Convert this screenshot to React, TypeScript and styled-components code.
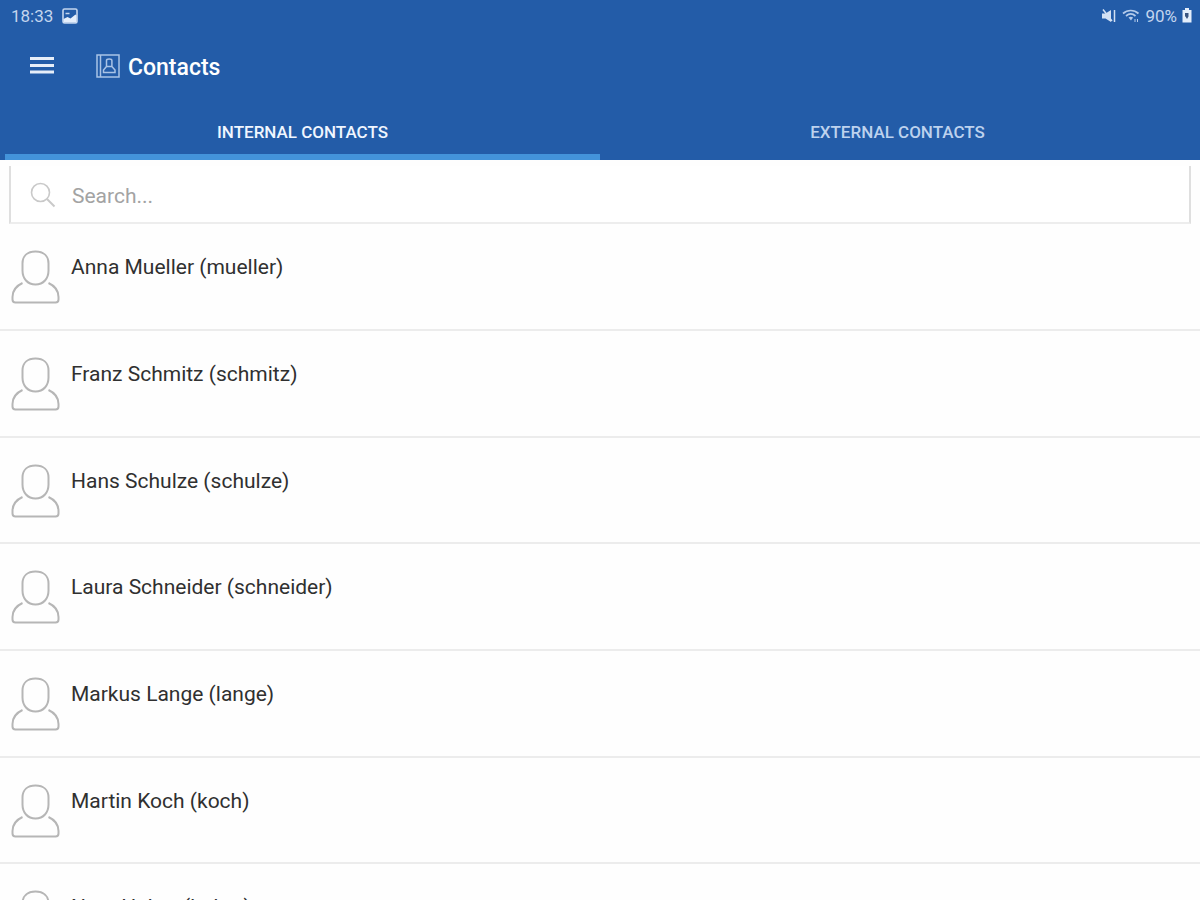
import React from "react";
import styled, { createGlobalStyle } from "styled-components";

const Global = createGlobalStyle`
  * { box-sizing: border-box; }
  html, body, #root { height: 100%; }
  body { margin: 0; background: #fefefe; font-family: Roboto, "Liberation Sans", sans-serif; }
`;

const Screen = styled.div`
  height: 100%;
  display: flex;
  flex-direction: column;
  overflow: hidden;
`;

const Header = styled.header`
  flex: none;
  background: #235ca8;
  color: #fff;
`;

const StatusBar = styled.div`
  display: flex;
  justify-content: space-between;
  align-items: center;
  height: 31px;
  padding: 0 8px 0 11px;
  font-size: 17px;
  color: #c3d5ee;
`;

const StatusGroup = styled.div<{ $gap: number }>`
  display: flex;
  align-items: center;
  gap: ${(p) => p.$gap}px;
`;

const TitleBar = styled.div`
  display: flex;
  align-items: center;
  height: 70px;
  padding-left: 30px;
`;

const MenuButton = styled.button`
  display: flex;
  padding: 0;
  margin-right: 42px;
  border: 0;
  background: none;
  color: inherit;
`;

const Title = styled.h1`
  display: flex;
  align-items: center;
  gap: 8px;
  margin: 0;
  font-size: 23px;
  font-weight: 500;
  line-height: 28px;
`;

const TitleText = styled.span`
  padding-top: 3px;
`;

const Tabs = styled.nav`
  display: flex;
  padding: 0 5px;
  height: 59px;
`;

const Tab = styled.button<{ $active?: boolean }>`
  flex: 1;
  padding: 9px 0 0;
  border: 0;
  border-bottom: 6px solid ${(p) => (p.$active ? "#4393da" : "transparent")};
  background: none;
  color: ${(p) => (p.$active ? "#f0f6ff" : "#bdd2ee")};
  font: 500 17px/20px Roboto, "Liberation Sans", sans-serif;
  text-transform: uppercase;
`;

const SearchBox = styled.label`
  flex: none;
  display: flex;
  align-items: center;
  gap: 16px;
  height: 58px;
  margin: 6px 9px 0;
  padding: 1px 0 0 19px;
  border: solid #dfdfdf;
  border-width: 0 2px 2px;
  border-bottom-color: #ededed;
  background: #fff;
`;

const SearchInput = styled.input`
  flex: 1;
  min-width: 0;
  padding: 2px 0 0;
  border: 0;
  outline: 0;
  background: none;
  color: #333;
  font: 400 21px/28px Roboto, "Liberation Sans", sans-serif;
  &::placeholder { color: #a3a3a3; opacity: 1; }
`;

const ContactList = styled.ul`
  flex: 1;
  min-height: 0;
  overflow: hidden;
  margin: 0;
  padding: 0;
  list-style: none;
`;

const ContactRow = styled.li`
  display: flex;
  align-items: flex-start;
  gap: 10px;
  height: 107px;
  padding: 26px 11px 0;
  border-bottom: 2px solid #ececec;
  &:nth-child(3n) { height: 106px; }
`;

const ContactName = styled.span`
  padding-top: 3px;
  font-size: 21px;
  line-height: 28px;
  color: #303030;
`;

const contacts = [
  "Anna Mueller (mueller)",
  "Franz Schmitz (schmitz)",
  "Hans Schulze (schulze)",
  "Laura Schneider (schneider)",
  "Markus Lange (lange)",
  "Martin Koch (koch)",
  "Nora Huber (huber)",
];

const PictureIcon = () => (
  <svg width="16" height="16" viewBox="0 0 16 16">
    <rect x="1" y="1" width="14" height="14" rx="1.5" fill="none" stroke="#c3d5ee" strokeWidth="1.6" />
    <path d="M1.5 14.5V11l4-2 3 1.500 5-4 1 1v7z" fill="#e4eefb" />
    <path d="M3.500 5.500h4" stroke="#c3d5ee" strokeWidth="1.500" />
  </svg>
);

const MuteIcon = () => (
  <svg width="16" height="16" viewBox="0 0 16 16" fill="#d3e1f4">
    <path d="M1 5.500h3.500L10 2v12l-5.500-3.500H1z" />
    <path d="M2 1.500l9 11.500M13.500 2v12" stroke="#d3e1f4" strokeWidth="1.500" />
  </svg>
);

const WifiIcon = () => (
  <svg width="18" height="16" viewBox="0 0 18 16" fill="none" stroke="#b5cbea" strokeWidth="1.700">
    <path d="M1 5.500c4.500-4 11-4 15.500 0M4 8c3-2.600 6.500-2.600 9.500 0" />
    <path d="M6.500 9.500q2.300-1.500 4.600 0L9 12.500z" fill="#b5cbea" stroke="none" />
    <path d="M13 11v3M15.500 11v3" strokeWidth="1" />
  </svg>
);

const BatteryIcon = () => (
  <svg width="10" height="15" viewBox="0 0 10 15">
    <path d="M3 0h4v2h2.500v12.500h-9V2H3z" fill="#e4eefb" />
    <path d="M3 5h3.500v3.500L5 11 3.500 8.500H3z" fill="#3a5580" />
  </svg>
);

const MenuIcon = () => (
  <svg width="24" height="20" viewBox="0 0 24 20">
    <path d="M0 2.500h24M0 9.500h24M0 16h24" stroke="#e6eef9" strokeWidth="3" />
  </svg>
);

const BookIcon = () => (
  <svg width="24" height="24" viewBox="0 0 24 24" fill="none" stroke="#a9c3e6" strokeWidth="1.500">
    <rect x="1" y="1" width="22" height="22" />
    <path d="M4.500 1v22" />
    <path d="M10.500 12.500V6.500q0-1.500 2.700-1.500t2.700 1.500v6M10.500 12.500L7.500 16v2.500h11.500V16l-3.100-3.500z" />
  </svg>
);

const SearchIcon = () => (
  <svg width="26" height="26" viewBox="0 0 26 26" fill="none" stroke="#c9c9c9" strokeWidth="1.600">
    <circle cx="10.500" cy="10.500" r="9" />
    <path d="M17 17l7.500 7.500" strokeWidth="2" />
  </svg>
);

const PersonIcon = () => (
  <svg width="50" height="54" viewBox="0 0 50 54" fill="none" stroke="#b6b6b6" strokeWidth="2">
    <path d="M24.500 1.500c-8 0-13 4.500-13 12v7c0 8 5 14 13 14s13-6 13-14v-7c0-7.500-5-12-13-12z" />
    <path d="M11.500 33C5 36 1.500 41 1.500 47v2.500q0 3 3 3h40q3 0 3-3V47c0-6-3.500-11-10-14" />
  </svg>
);

export default function App() {
  return (
    <>
      <Global />
      <Screen>
        <Header>
          <StatusBar>
            <StatusGroup $gap={9}>
              <span>18:33</span>
              <PictureIcon />
            </StatusGroup>
            <StatusGroup $gap={5}>
              <MuteIcon />
              <WifiIcon />
              <span>90%</span>
              <BatteryIcon />
            </StatusGroup>
          </StatusBar>
          <TitleBar>
            <MenuButton type="button" aria-label="Menu">
              <MenuIcon />
            </MenuButton>
            <Title>
              <BookIcon />
              <TitleText>Contacts</TitleText>
            </Title>
          </TitleBar>
          <Tabs>
            <Tab type="button" $active>Internal contacts</Tab>
            <Tab type="button">External contacts</Tab>
          </Tabs>
        </Header>
        <SearchBox>
          <SearchIcon />
          <SearchInput type="text" aria-label="Search" placeholder="Search..." />
        </SearchBox>
        <ContactList>
          {contacts.map((name) => (
            <ContactRow key={name}>
              <PersonIcon />
              <ContactName>{name}</ContactName>
            </ContactRow>
          ))}
        </ContactList>
      </Screen>
    </>
  );
}
